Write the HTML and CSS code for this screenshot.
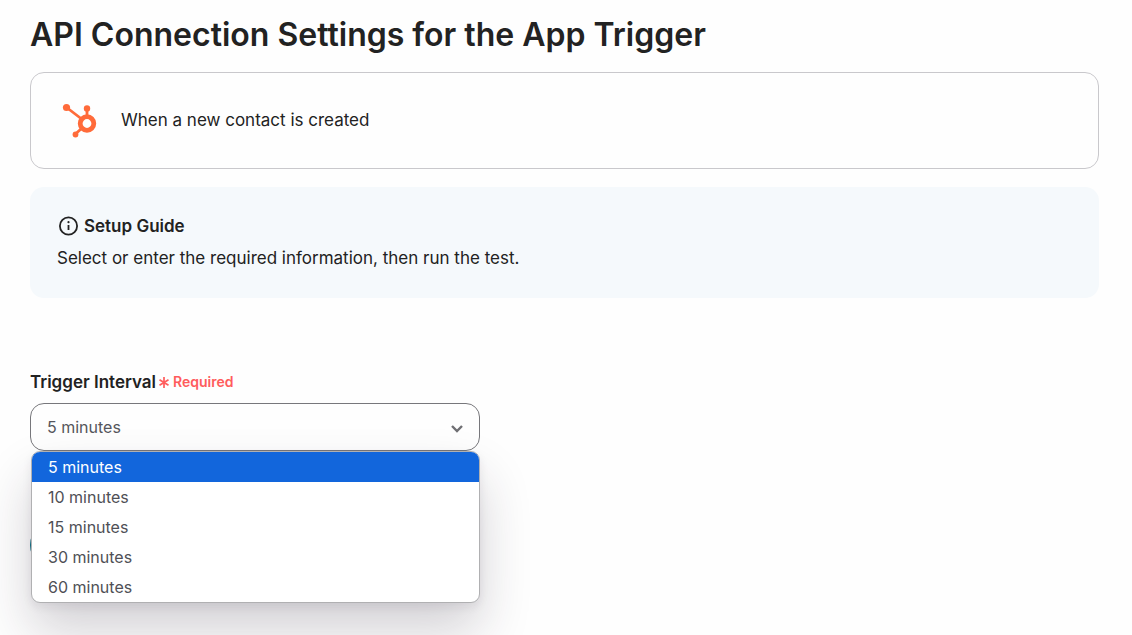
FILE: index.html
```html
<!DOCTYPE html>
<html lang="en">
<head>
  <meta charset="UTF-8">
  <title>API Connection Settings for the App Trigger</title>
  <link rel="stylesheet" href="styles.css">
</head>
<body>

<main class="settings">
  <h1 class="title">API Connection Settings for the App Trigger</h1>

  <section class="app">
    <svg class="app_icon" width="36" height="36" viewBox="0 0 36 36" aria-hidden="true">
      <g fill="none" stroke="#ff6b3a">
        <path d="M5 5L20 16.500M26 6V15M21 26L14.500 32" stroke-width="2.800"/>
        <circle cx="26" cy="21.500" r="6.800" stroke-width="4.800"/>
      </g>
      <g fill="#ff6b3a">
        <circle cx="5.500" cy="5.500" r="3.600"/>
        <circle cx="26" cy="6.500" r="3.200"/>
        <circle cx="14.500" cy="32.500" r="2.900"/>
      </g>
    </svg>
    <span>When a new contact is created</span>
  </section>

  <section class="guide">
    <h2 class="guide_title">
      <svg width="20" height="20" viewBox="0 0 20 20" aria-hidden="true">
        <circle cx="10.500" cy="10" r="8.600" fill="none" stroke="#222" stroke-width="1.800"/>
        <path d="M10.500 9V14" stroke="#222" stroke-width="1.800"/>
        <circle cx="10.500" cy="6.200" r="1.100" fill="#222"/>
      </svg>
      Setup Guide
    </h2>
    <p class="guide_text">Select or enter the required information, then run the test.</p>
  </section>

  <form class="form">
    <label class="form_label" for="interval">
      Trigger Interval
      <span class="required">
        <svg width="10" height="12" viewBox="0 0 10 12" aria-hidden="true">
          <path d="M5 1V12M0.500 3.700L9.500 9.300M9.500 3.700L0.500 9.300" stroke="#ff5c5c" stroke-width="1.700"/>
        </svg>
        Required
      </span>
    </label>
    <div class="select">
      <select class="select_box" id="interval" name="interval">
        <option>5 minutes</option>
        <option>10 minutes</option>
        <option>15 minutes</option>
        <option>30 minutes</option>
        <option>60 minutes</option>
      </select>
      <svg class="select_arrow" width="14" height="10" viewBox="0 0 14 10" aria-hidden="true">
        <path d="M2 2L7 7L12 2" fill="none" stroke="#6f6f73" stroke-width="2.400"/>
      </svg>
      <ul class="menu" role="listbox">
        <li class="menu_item is-selected" role="option" aria-selected="true">5 minutes</li>
        <li class="menu_item" role="option">10 minutes</li>
        <li class="menu_item" role="option">15 minutes</li>
        <li class="menu_item" role="option">30 minutes</li>
        <li class="menu_item" role="option">60 minutes</li>
      </ul>
    </div>
    <button class="form_submit" type="submit"></button>
  </form>
</main>

</body>
</html>
```
FILE: styles.css
```css
* {
  box-sizing: border-box;
}
body {
  margin: 0;
  background-color: #fefefe;
  color: #222;
  font-family: Inter, "Liberation Sans", sans-serif;
  font-size: 17px;
  line-height: 24px;
}
.settings {
  min-height: 100vh;
  padding: 11px 33px 66px 30px;
}
.title {
  margin: 0 0 13px;
  font-size: 32px;
  font-weight: 600;
  line-height: 48px;
}
.app {
  display: flex;
  align-items: center;
  gap: 24px;
  height: 97px;
  padding: 0 30px 2px;
  border: 1px solid #c9c8cc;
  border-radius: 14px;
}
.app_icon {
  flex: none;
}
.guide {
  margin-top: 18px;
  padding: 27px 27px 28px;
  border-radius: 14px;
  background-color: #f5f9fc;
}
.guide_title {
  display: flex;
  align-items: center;
  gap: 6px;
  margin: 0 0 8px;
  padding-left: 1px;
  font-size: 17px;
  font-weight: 600;
  line-height: 24px;
}
.guide_text {
  margin: 0;
}

.form {
  padding-top: 72px;
}
.form_label {
  display: flex;
  align-items: center;
  gap: 3px;
  margin-bottom: 9px;
  font-weight: 600;
}
.required {
  display: flex;
  align-items: center;
  gap: 4px;
  color: #ff5c5c;
  font-size: 14px;
}
.select {
  position: relative;
  max-width: 450px;
}
.select_box {
  display: block;
  width: 100%;
  height: 48px;
  padding: 0 16px;
  border: 1px solid #77777b;
  border-radius: 14px;
  background: #fefefe;
  color: #55565c;
  font: inherit;
  font-size: 16px;
  appearance: none;
}
.select_arrow {
  position: absolute;
  top: 21px;
  right: 16px;
  pointer-events: none;
}
.menu {
  position: absolute;
  top: 48px;
  right: 0;
  left: 1px;
  z-index: 1;
  margin: 0;
  padding: 0;
  overflow: hidden;
  border: 1px solid #b0b0b2;
  border-radius: 9px;
  background-color: #fff;
  box-shadow: 0 4px 10px rgba(40, 30, 50, .08), 0 28px 52px rgba(40, 30, 50, .2);
  list-style: none;
}
.menu_item {
  padding: 3px 16px;
  color: #4f5056;
  font-size: 16px;
}
.menu_item.is-selected {
  background-color: #1266dc;
  color: #fff;
}
.form_submit {
  display: block;
  width: 120px;
  height: 48px;
  margin-top: 70px;
  border: none;
  border-radius: 24px;
  background-color: #0b7285;
}
```
